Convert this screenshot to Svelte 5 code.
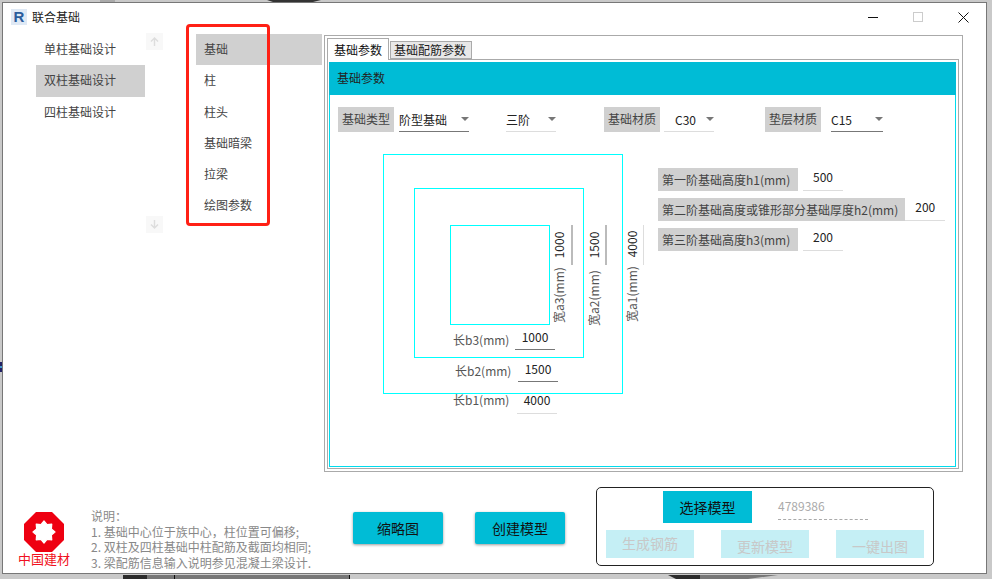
<script>
  const designs = ['单柱基础设计', '双柱基础设计', '四柱基础设计'];
  const sections = ['基础', '柱', '柱头', '基础暗梁', '拉梁', '绘图参数'];
  const heights = [
    { label: '第一阶基础高度h1(mm)', value: '500' },
    { label: '第二阶基础高度或锥形部分基础厚度h2(mm)', value: '200' },
    { label: '第三阶基础高度h3(mm)', value: '200' }
  ];
  const notes = [
    '说明\uFF1A',
    '1. 基础中心位于族中心\uFF0C柱位置可偏移;',
    '2. 双柱及四柱基础中柱配筋及截面均相同;',
    '3. 梁配筋信息输入说明参见混凝土梁设计.'
  ];

  // drawing canvas starts at page x 330, y 145
  const ox = 330;
  const oy = 145;
  const rects = [
    { x: 383, y: 154, w: 240, h: 240 },
    { x: 414, y: 188, w: 170, h: 170 },
    { x: 450, y: 225, w: 100, h: 100 }
  ];
  const widthDims = [
    { label: '长b3(mm)', lx: 453, ly: 340, value: '1000', vx: 515, vy: 337, uy: 349, dark: true },
    { label: '长b2(mm)', lx: 455, ly: 371, value: '1500', vx: 518, vy: 369, uy: 381, dark: true },
    { label: '长b1(mm)', lx: 453, ly: 400, value: '4000', vx: 517, vy: 400, uy: 413, dark: false }
  ];
  const depthDims = [
    { label: '宽a3(mm)', x: 559, ly: 295, value: '1000', vy: 245, ux: 571, tone: 'mid' },
    { label: '宽a2(mm)', x: 594, ly: 298, value: '1500', vy: 245, ux: 605, tone: 'mid' },
    { label: '宽a1(mm)', x: 632, ly: 294, value: '4000', vy: 244, ux: 643, tone: 'pale' }
  ];

  // eight pointed star hole of the logo
  const star = Array.from({ length: 16 }, (_, i) => {
    const r = i % 2 ? 8 : 11;
    const a = (Math.PI / 8) * i - Math.PI / 2;
    return `${(20 + r * Math.cos(a)).toFixed(2)},${(20 + r * Math.sin(a)).toFixed(2)}`;
  }).join(' ');
</script>

<div class="desktop">
  <svg class="backdrop" width="992" height="579" viewBox="0 0 992 579">
    <rect x="100" y="0" width="15" height="2" fill="#aaa" />
    <path d="M267 0h54l-8 2h-40z" fill="#333" />
    <rect x="0" y="362" width="2" height="10" fill="#226" />
    <rect x="0" y="366" width="2" height="2" fill="#49c" />
    <rect x="123" y="575" width="24" height="4" fill="#2c2c2c" />
    <rect x="147" y="575" width="203" height="4" fill="#777" />
    <rect x="174" y="575" width="1" height="4" fill="#111" />
    <rect x="349" y="575" width="1" height="4" fill="#111" />
    <path d="M668 575h32v4h-24z" fill="#2c2c2c" />
    <path d="M700 575h78l-30 4h-48z" fill="#777" />
  </svg>

  <div class="window">
    <header class="titlebar">
      <span class="app-icon">R</span>
      <span class="title">联合基础</span>
      <div class="controls">
        <svg width="10" height="10" viewBox="0 0 10 10"><path d="M0 5.5h10" stroke="#111" /></svg>
        <svg width="10" height="10" viewBox="0 0 10 10"><rect x=".5" y=".5" width="9" height="9" fill="none" stroke="#ccc" /></svg>
        <svg width="11" height="11" viewBox="0 0 11 11"><path d="M.5.5l10 10M10.5.5l-10 10" stroke="#111" /></svg>
      </div>
    </header>

    <div class="body">
      <nav class="nav designs">
        {#each designs as item, i}
          <div class="nav-item" class:selected={i === 1}>{item}</div>
        {/each}
      </nav>

      <div class="scroller">
        <button type="button" class="scroll-btn" aria-label="Up">
          <svg width="9" height="9" viewBox="0 0 9 9"><path d="M4.5 9V1M1 4.5l3.5-3.5L8 4.5" fill="none" stroke="#ddd" stroke-width="1.4" /></svg>
        </button>
        <button type="button" class="scroll-btn" aria-label="Down">
          <svg width="9" height="9" viewBox="0 0 9 9"><path d="M4.5 0v8M1 4.5L4.5 8 8 4.5" fill="none" stroke="#ddd" stroke-width="1.4" /></svg>
        </button>
      </div>

      <nav class="nav sections">
        {#each sections as item, i}
          <div class="nav-item" class:selected={i === 0}>{item}</div>
        {/each}
      </nav>

      <section class="tabs">
        <div class="tab-strip">
          <div class="tab active">基础参数</div>
          <div class="tab">基础配筋参数</div>
        </div>
        <div class="tab-panel">
          <div class="card">
            <div class="card-head">基础参数</div>

            <div class="params">
              <span class="tag">基础类型</span>
              <div class="select dark type"><span>阶型基础</span><i class="caret"></i></div>
              <div class="select steps"><span>三阶</span><i class="caret"></i></div>
              <span class="tag material">基础材质</span>
              <div class="select grade"><span>C30</span><i class="caret"></i></div>
              <span class="tag cushion">垫层材质</span>
              <div class="select dark cushion-grade"><span>C15</span><i class="caret"></i></div>
            </div>

            <div class="lower">
              <div class="drawing">
                {#each rects as r}
                  <div class="outline" style="left:{r.x - ox}px;top:{r.y - oy}px;width:{r.w}px;height:{r.h}px"></div>
                {/each}
                {#each widthDims as d}
                  <span class="dim" style="left:{d.lx - ox}px;top:{d.ly - oy}px">{d.label}</span>
                  <span class="dim-value" class:dark={d.dark} style="left:{d.vx - ox}px;top:{d.vy - oy}px;height:{d.uy - d.vy + 8}px">{d.value}</span>
                {/each}
                {#each depthDims as d}
                  <span class="dim upright" style="left:{d.x - ox}px;top:{d.ly - oy}px">{d.label}</span>
                  <span class="dim upright value" style="left:{d.x - ox}px;top:{d.vy - oy}px">{d.value}</span>
                  <i class="tick {d.tone}" style="left:{d.ux - ox}px"></i>
                {/each}
              </div>

              <div class="heights">
                {#each heights as h}
                  <div class="height-row">
                    <span class="tag">{h.label}</span>
                    <span class="num">{h.value}</span>
                  </div>
                {/each}
              </div>
            </div>
          </div>
        </div>
      </section>
    </div>

    <footer class="footer">
      <div class="brand">
        <svg width="40" height="40" viewBox="0 0 40 40">
          <path fill="#ee0011" d="M12 0h16l12 12v16L28 40H12L0 28V12z" />
          <polygon points={star} fill="#fff" stroke="#fff" stroke-width="1.2" stroke-linejoin="round" />
        </svg>
        <span class="brand-name">中国建材</span>
      </div>

      <div class="notes">
        {#each notes as line}
          <div>{line}</div>
        {/each}
      </div>

      <button type="button" class="action thumb">缩略图</button>
      <button type="button" class="action create">创建模型</button>

      <div class="model-box">
        <div class="pick-row">
          <button type="button" class="pick">选择模型</button>
          <span class="model-id">4789386</span>
        </div>
        <div class="output-row">
          <button type="button" class="off" disabled>生成钢筋</button>
          <button type="button" class="off low" disabled>更新模型</button>
          <button type="button" class="off low" disabled>一键出图</button>
        </div>
      </div>
    </footer>

    <div class="callout"></div>
  </div>
</div>

<style>
  :global(body) {
    margin: 0;
    overflow: hidden;
  }

  .desktop {
    position: relative;
    width: 992px;
    height: 579px;
    background: #c9c9c9;
    font-family: "Noto Sans CJK SC", "Noto Sans", sans-serif;
    font-size: 12px;
    color: #444;
  }

  .backdrop {
    position: absolute;
    inset: 0;
  }

  .window {
    position: absolute;
    left: 2px;
    top: 2px;
    width: 985px;
    height: 572px;
    box-sizing: border-box;
    border: 1px solid #777;
    background: #fff;
    display: flex;
    flex-direction: column;
  }

  .titlebar {
    height: 31px;
    flex: none;
    display: flex;
    align-items: center;
    padding: 0 17px 3px 8px;
    box-sizing: border-box;
  }

  .app-icon {
    width: 16px;
    height: 16px;
    background: #dfe9f5;
    color: #2a5c9c;
    font: bold 15px/16px "Liberation Sans", sans-serif;
    text-align: center;
  }

  .title {
    margin-left: 5px;
    color: #222;
    line-height: 16px;
  }

  .controls {
    margin-left: auto;
    display: flex;
    gap: 35px;
    align-items: center;
  }

  .body {
    height: 446px;
    flex: none;
    display: flex;
    align-items: flex-start;
    padding-left: 33px;
  }

  .nav-item {
    height: 31.3px;
    line-height: 30px;
    padding-left: 8px;
    box-sizing: border-box;
    white-space: nowrap;
  }

  .nav-item.selected {
    background: #d0d0d0;
  }

  .designs {
    width: 109px;
  }

  .scroller {
    width: 17px;
    height: 200px;
    margin: -1px 0 0 1px;
    display: flex;
    flex-direction: column;
    justify-content: space-between;
  }

  .scroll-btn {
    width: 17px;
    height: 17px;
    padding: 0;
    border: 0;
    background: #f8f8f8;
    display: flex;
    align-items: center;
    justify-content: center;
  }

  .sections {
    width: 126px;
    margin-left: 33px;
  }

  .tabs {
    width: 639px;
    height: 437px;
    margin: 1px 0 0 2px;
    box-sizing: border-box;
    border: 1px solid #aaa;
    padding: 2px 3px 2px 2px;
    display: flex;
    flex-direction: column;
  }

  .tab-strip {
    height: 22px;
    flex: none;
    display: flex;
    align-items: flex-end;
    position: relative;
    z-index: 1;
    margin-bottom: -1px;
  }

  .tab {
    height: 18px;
    line-height: 16px;
    box-sizing: border-box;
    padding: 0 5px 0 3px;
    background: #e8e8e8;
    border: 1px solid #aaa;
    margin-left: 1px;
    color: #222;
    margin-bottom: 1px;
  }

  .tab.active {
    height: 22px;
    margin-left: 0;
    margin-bottom: 0;
    background: #fff;
    border-bottom: 0;
    padding: 0 6px;
    line-height: 21px;
    color: #111;
  }

  .tab-panel {
    flex: 1;
    border: 1px solid #aaa;
    padding: 2px 2px 1px 1px;
    display: flex;
    min-height: 0;
  }

  .card {
    flex: 1;
    border: 1px solid #00dcee;
    border-top: 0;
    display: flex;
    flex-direction: column;
  }

  .card-head {
    height: 33px;
    margin: 0 -1px;
    padding-left: 8px;
    background: #00bcd6;
    color: #222;
    line-height: 32px;
    flex: none;
  }

  .params {
    display: flex;
    height: 25px;
    margin: 12px 0 0 8px;
  }

  .tag {
    background: #d0d0d0;
    padding: 0 4px;
    white-space: nowrap;
    color: #444;
  }

  .params .tag {
    line-height: 23px;
    flex: none;
  }

  .select {
    position: relative;
    height: 25px;
    line-height: 25px;
    box-sizing: border-box;
    border-bottom: 1px solid #ddd;
    color: #222;
  }

  .select.dark {
    border-bottom-color: #777;
  }

  .caret {
    position: absolute;
    top: 10px;
    right: 0;
    width: 0;
    height: 0;
    border: 4px solid transparent;
    border-top: 4px solid #777;
    border-bottom: 0;
  }

  .type { width: 70px; margin-left: 5px; }
  .steps { width: 50px; margin-left: 37px; }
  .material { margin-left: 48px; }
  .grade { width: 50px; margin-left: 4px; padding-left: 11px; }
  .cushion { margin-left: 51px; }
  .cushion-grade { width: 52px; margin-left: 10px; }

  .lower {
    display: flex;
    margin-top: 13px;
  }

  .drawing {
    position: relative;
    width: 328px;
    height: 300px;
    flex: none;
  }

  .outline {
    position: absolute;
    box-sizing: border-box;
    border: 1px solid #00ffff;
  }

  .dim {
    position: absolute;
    transform: translateY(-50%);
    white-space: nowrap;
    line-height: 16px;
    color: #555;
  }

  .dim.upright {
    transform: translate(-50%, -50%) rotate(-90deg);
  }

  .dim.value {
    color: #222;
  }

  .dim-value {
    position: absolute;
    width: 40px;
    margin-top: -8px;
    text-align: center;
    line-height: 16px;
    color: #222;
    border-bottom: 1px solid #ddd;
  }

  .dim-value.dark {
    border-bottom-color: #777;
  }

  .tick {
    position: absolute;
    top: 80px;
    height: 40px;
  }

  .tick.mid {
    border-left: 2px solid #bbb;
  }

  .tick.pale {
    border-left: 1px solid #ddd;
  }

  .heights {
    display: flex;
    flex-direction: column;
    margin-top: 23px;
  }

  .height-row {
    display: flex;
    height: 30px;
  }

  .height-row .tag {
    min-width: 132px;
    height: 23px;
    line-height: 24px;
  }

  .height-row:nth-child(2) .tag {
    padding-right: 7px;
  }

  .num {
    width: 40px;
    height: 22px;
    line-height: 18px;
    margin-left: 5px;
    text-align: center;
    color: #222;
    border-bottom: 1px solid #ddd;
  }

  .height-row:nth-child(2) .num {
    margin-left: 0;
  }

  .footer {
    flex: 1;
    display: flex;
    align-items: flex-start;
    min-height: 0;
  }

  .brand {
    width: 54px;
    margin: 32px 0 0 14px;
    display: flex;
    flex-direction: column;
    align-items: center;
  }

  .brand-name {
    color: #f01020;
    font-size: 13px;
    line-height: 14px;
    white-space: nowrap;
  }

  .notes {
    width: 262px;
    margin: 28px 0 0 20px;
    color: #888;
    line-height: 15.7px;
    white-space: nowrap;
    flex: none;
  }

  .action,
  .pick {
    border: 0;
    padding: 0;
    border-radius: 2px;
    background: #00bcd6;
    color: #111;
    font: inherit;
    font-size: 14px;
  }

  .action {
    width: 90px;
    height: 32px;
    margin-top: 32px;
    box-shadow: 0 1px 3px rgba(0, 0, 0, 0.4);
    flex: none;
  }

  .thumb { margin-left: 0; }
  .create { margin-left: 32px; }

  .model-box {
    width: 338px;
    height: 79px;
    margin: 7px 0 0 31px;
    box-sizing: border-box;
    border: 1px solid #222;
    border-radius: 5px;
    padding: 3px 9px 0;
    flex: none;
  }

  .pick-row {
    display: flex;
    padding-left: 57px;
    height: 32px;
  }

  .pick {
    width: 89px;
    height: 32px;
    border-radius: 0;
  }

  .model-id {
    width: 90px;
    height: 25px;
    margin-left: 26px;
    margin-top: 4px;
    color: #aaa;
    line-height: 22px;
    border-bottom: 1px dashed #aaa;
    box-sizing: border-box;
  }

  .output-row {
    display: flex;
    gap: 27px;
    margin-top: 7px;
  }

  .off {
    width: 88px;
    height: 28px;
    border: 0;
    padding: 0 0 3px;
    background: #c5eff5;
    color: #c8c8c8;
    font: inherit;
    font-size: 14px;
  }

  .off.low {
    padding: 3px 0 0;
  }

  .callout {
    position: absolute;
    left: 183px;
    top: 21px;
    width: 84px;
    height: 202px;
    box-sizing: border-box;
    border: 3px solid #ff2015;
    border-radius: 4px;
  }
</style>
